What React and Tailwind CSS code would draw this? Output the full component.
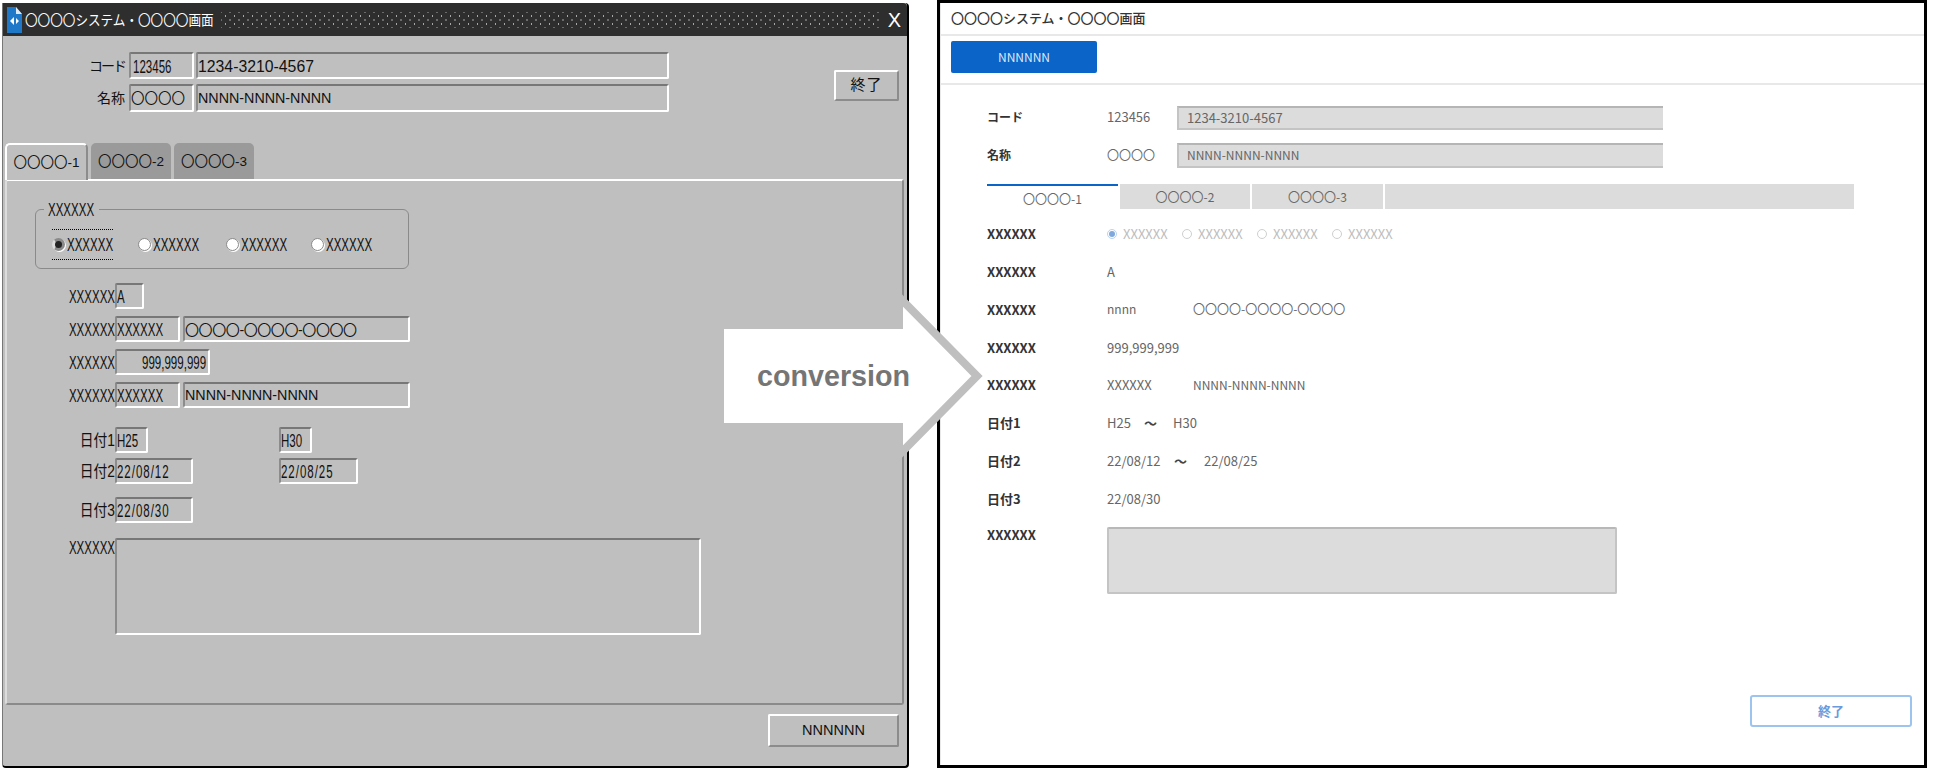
import React from "react";

const jp = "font-['Liberation_Sans','Noto_Sans_CJK_JP',sans-serif]";
const noto = "font-['Noto_Sans_CJK_JP',sans-serif]";

function Cond({ children, className = "" }) {
  return (
    <span className={`inline-block origin-left scale-x-[0.64] whitespace-nowrap text-[18px] leading-none ${className}`}>
      {children}
    </span>
  );
}

function Sunken({ className = "", children }) {
  return (
    <div
      className={`flex items-center overflow-hidden whitespace-nowrap rounded-[2px] border-2 border-t-[#777777] border-l-[#8c8c8c] border-r-white border-b-white pt-[2px] ${className}`}
    >
      {children}
    </div>
  );
}

function Label({ children, className = "w-[108px]", inner = "scale-x-[0.64] text-[18px]" }) {
  return (
    <div className={`flex shrink-0 items-center justify-end overflow-visible pt-[2px] leading-none ${className}`}>
      <span className={`inline-block origin-right whitespace-nowrap ${inner}`}>{children}</span>
    </div>
  );
}

function DateLabel({ children }) {
  return <Label inner="scale-x-[0.86] text-[16px]">{children}</Label>;
}

function OldRadio({ label, on, className }) {
  return (
    <div className={`flex items-center ${className}`}>
      <span
        className={`h-[13px] w-[13px] shrink-0 rounded-full border border-[#8a8a8a] shadow-[1px_1px_0_#ffffff] ${on ? "border-[3px] border-l-[#dddddd] bg-[#222222]" : "bg-white"}`}
      />
      <Cond className="ml-[2px]">{label}</Cond>
    </div>
  );
}

function TitleIcon() {
  return (
    <svg width="15" height="26" viewBox="0 0 15 26" className="shrink-0">
      <path d="M0 0H9L15 7V26H0Z" fill="#1f78c8" />
      <path d="M9 0L15 7H9Z" fill="#dfe9f3" />
      <path d="M7 10L3 14L7 18ZM9 11V17L12 14Z" fill="#ffffff" />
    </svg>
  );
}

function OldWindow() {
  return (
    <div className={`mt-[3px] flex h-[765px] w-[907px] shrink-0 flex-col rounded-b-[4px] rounded-tr-[4px] border-r-2 border-b-2 border-l border-black border-l-[#777777] bg-[#bfbfbf] text-[#111111] ${jp}`}>
      <div className="flex h-[33px] shrink-0 items-center rounded-tr-[4px] bg-[#2e2e2e] pl-[4px] pr-[6px] text-white">
        <TitleIcon />
        <div className="ml-[3px] w-[196px] shrink-0">
          <span className="inline-block origin-left scale-x-[0.9] whitespace-nowrap text-[14px] leading-none">
            〇〇〇〇システム・〇〇〇〇画面
          </span>
        </div>
        <div className="h-[16px] flex-1 bg-[radial-gradient(circle,#a8a8a8_0.8px,transparent_1px),radial-gradient(circle,#a8a8a8_0.8px,transparent_1px)] bg-[size:9px_8px] bg-[position:0_0,4.5px_4px]" />
        <span className="ml-[6px] text-[20px] leading-none">X</span>
      </div>

      <div className="flex h-[107px] shrink-0 justify-between pt-[16px] pr-[8px]">
        <div className="flex flex-col gap-[5px]">
          <div className="flex h-[27px] gap-[2px]">
            <div className="mr-[2px] flex w-[122px] items-center justify-end text-[14px] leading-none tracking-[-2px]">コード</div>
            <Sunken className="w-[65px]">
              <Cond className="ml-[2px]">123456</Cond>
            </Sunken>
            <Sunken className="w-[473px] text-[15.8px]">1234-3210-4567</Sunken>
          </div>
          <div className="flex h-[28px] gap-[2px]">
            <div className="mr-[2px] flex w-[122px] items-center justify-end text-[14px] leading-none">名称</div>
            <Sunken className="w-[65px] text-[13.5px]">〇〇〇〇</Sunken>
            <Sunken className="w-[473px] text-[14.3px]">NNNN-NNNN-NNNN</Sunken>
          </div>
        </div>
        <button className="mt-[18px] flex h-[31px] w-[65px] items-center justify-center rounded-[2px] border-2 border-t-white border-l-white border-r-[#8c8c8c] border-b-[#8c8c8c] text-[15px] tracking-[1px]">
          終了
        </button>
      </div>

      <div className="relative z-10 -mb-[1px] ml-[2px] flex h-[37px] shrink-0 items-start gap-[3px]">
        <div className="flex h-[37px] w-[83px] items-center justify-center rounded-t-[5px] border-2 border-b-0 border-t-white border-l-white border-r-[#8c8c8c] bg-[#bfbfbf] pt-[2px] text-[13.5px]">
          〇〇〇〇-1
        </div>
        <div className="flex h-[36px] w-[80px] items-center justify-center rounded-t-[5px] bg-[#9a9a9a] pt-[2px] text-[13.5px]">〇〇〇〇-2</div>
        <div className="flex h-[36px] w-[80px] items-center justify-center rounded-t-[5px] bg-[#9a9a9a] pt-[2px] text-[13.5px]">〇〇〇〇-3</div>
      </div>

      <div className="ml-[2px] mr-[3px] flex min-h-0 flex-1 flex-col rounded-[3px] border-2 border-t-white border-l-[#dcdcdc] border-r-[#8a8a8a] border-b-[#8a8a8a]">
        <div className="relative ml-[28px] mt-[28px] flex h-[60px] w-[374px] shrink-0 items-start rounded-[6px] border border-[#8a8a8a] pl-[16px] pt-[19px]">
          <span className="absolute -top-[9px] left-[8px] bg-[#bfbfbf] px-[4px] text-[18px] leading-none">
            <span className="inline-block w-[47px] origin-left scale-x-[0.64] whitespace-nowrap">XXXXXX</span>
          </span>
          <OldRadio label="XXXXXX" on className="h-[31px] w-[61px] border-y border-dotted border-black" />
          <OldRadio label="XXXXXX" className="ml-[25px] h-[31px] w-[63px]" />
          <OldRadio label="XXXXXX" className="ml-[25px] h-[31px] w-[60px]" />
          <OldRadio label="XXXXXX" className="ml-[25px] h-[31px] w-[61px]" />
        </div>

        <div className="mt-[14px] flex flex-col gap-[7px]">
          <div className="flex h-[26px]">
            <Label>XXXXXX</Label>
            <Sunken className="w-[29px]">
              <Cond>A</Cond>
            </Sunken>
          </div>
          <div className="flex h-[26px]">
            <Label>XXXXXX</Label>
            <Sunken className="w-[65px]">
              <Cond>XXXXXX</Cond>
            </Sunken>
            <Sunken className="ml-[3px] w-[227px] text-[14px] tracking-[-0.4px]">〇〇〇〇-〇〇〇〇-〇〇〇〇</Sunken>
          </div>
          <div className="flex h-[26px]">
            <Label>XXXXXX</Label>
            <Sunken className="w-[95px] justify-end pr-[2px]">
              <span className="inline-block origin-right scale-x-[0.64] whitespace-nowrap text-[18px] leading-none">999,999,999</span>
            </Sunken>
          </div>
          <div className="flex h-[26px]">
            <Label>XXXXXX</Label>
            <Sunken className="w-[65px]">
              <Cond>XXXXXX</Cond>
            </Sunken>
            <Sunken className="ml-[3px] w-[227px] text-[14.3px]">NNNN-NNNN-NNNN</Sunken>
          </div>
        </div>

        <div className="mt-[19px] flex h-[26px]">
          <DateLabel>日付1</DateLabel>
          <Sunken className="w-[33px]">
            <Cond>H25</Cond>
          </Sunken>
          <Sunken className="ml-[131px] w-[33px]">
            <Cond>H30</Cond>
          </Sunken>
        </div>
        <div className="mt-[5px] flex h-[26px]">
          <DateLabel>日付2</DateLabel>
          <Sunken className="w-[78px]">
            <Cond className="tracking-[1.5px]">22/08/12</Cond>
          </Sunken>
          <Sunken className="ml-[86px] w-[79px]">
            <Cond className="tracking-[1.5px]">22/08/25</Cond>
          </Sunken>
        </div>
        <div className="mt-[13px] flex h-[26px]">
          <DateLabel>日付3</DateLabel>
          <Sunken className="w-[78px]">
            <Cond className="tracking-[1.5px]">22/08/30</Cond>
          </Sunken>
        </div>
        <div className="mt-[15px] flex h-[97px]">
          <Label className="h-[18px] w-[108px]">XXXXXX</Label>
          <Sunken className="w-[586px]" />
        </div>
      </div>

      <div className="flex h-[61px] shrink-0 items-start justify-end pr-[8px] pt-[9px]">
        <button className="flex h-[33px] w-[131px] items-center justify-center rounded-[2px] border-2 border-t-white border-l-white border-r-[#8c8c8c] border-b-[#8c8c8c] text-[14.5px]">
          NNNNNN
        </button>
      </div>
    </div>
  );
}

function NewRow({ label, children }) {
  return (
    <div className="flex h-[37.8px] items-center text-[13px]">
      <div className="w-[120px] shrink-0 text-[13px] font-bold text-[#333333]">{label}</div>
      {children}
    </div>
  );
}

function NewRadio({ on, className = "" }) {
  return (
    <div className={`flex items-center text-[13px] text-[#bdbdbd] ${className}`}>
      <span className={`mr-[6px] flex h-[10px] w-[10px] items-center justify-center rounded-full border ${on ? "border-[#b9d3ee]" : "border-[#cfcfcf]"}`}>
        {on && <span className="h-[6px] w-[6px] rounded-full bg-[#7fa9dc]" />}
      </span>
      XXXXXX
    </div>
  );
}

function NewScreen() {
  return (
    <div className={`ml-[28px] flex h-[768px] w-[990px] shrink-0 flex-col border-[3px] border-black bg-white text-[12px] text-[#666666] shadow-[inset_1px_0_0_#e8e8e8] ${noto}`}>
      <div className="flex h-[33px] shrink-0 items-center border-b-2 border-[#e8e8e8] pl-[11px] pb-[1px] text-[13px] font-medium text-[#333333]">
        〇〇〇〇システム・〇〇〇〇画面
      </div>
      <div className="flex h-[49px] shrink-0 items-start border-b-2 border-[#e8e8e8] pl-[11px] pt-[5px]">
        <button className="flex h-[32px] w-[146px] items-center justify-center rounded-[2px] bg-[#0b64c8] text-[12px] text-[#dbe8f7]">
          NNNNNN
        </button>
      </div>

      <div className="flex min-h-0 flex-1 flex-col pl-[47px]">
        <div className="mt-[21px] flex h-[24px] items-center">
          <div className="-mt-[2px] w-[120px] text-[12px] font-bold text-[#333333]">コード</div>
          <div className="-mt-[2px] w-[70px] text-[13px]">123456</div>
          <div className="flex h-[24px] w-[486px] items-center border-y-2 border-l-2 border-t-[#b5b5b5] border-l-[#c4c4c4] border-b-[#c4c4c4] bg-[#dcdcdc] pb-[1px] pl-[8px] text-[13px]">
            1234-3210-4567
          </div>
        </div>
        <div className="mt-[13px] flex h-[25px] items-center">
          <div className="-mt-[2px] w-[120px] text-[12px] font-bold text-[#333333]">名称</div>
          <div className="-mt-[2px] w-[70px]">〇〇〇〇</div>
          <div className="flex h-[25px] w-[486px] items-center border-y-2 border-l-2 border-t-[#b5b5b5] border-l-[#c4c4c4] border-b-[#c4c4c4] bg-[#dcdcdc] pb-[1px] pl-[8px]">
            NNNN-NNNN-NNNN
          </div>
        </div>

        <div className="mt-[16px] flex h-[25px] w-[867px] gap-[2px]">
          <div className="flex w-[131px] items-center justify-center border-t-2 border-[#0b64c8] pt-[2px]">〇〇〇〇-1</div>
          <div className="flex w-[130px] items-center justify-center bg-[#dcdcdc]">〇〇〇〇-2</div>
          <div className="flex w-[131px] items-center justify-center bg-[#dcdcdc]">〇〇〇〇-3</div>
          <div className="flex-1 bg-[#dcdcdc]" />
        </div>

        <div className="mt-[6px] flex flex-col">
          <NewRow label="XXXXXX">
            <NewRadio on className="ml-0 w-[75px]" />
            <NewRadio className="w-[75px]" />
            <NewRadio className="w-[75px]" />
            <NewRadio />
          </NewRow>
          <NewRow label="XXXXXX">A</NewRow>
          <NewRow label="XXXXXX">
            <div className="w-[86px] text-[12px]">nnnn</div>
            <div className="text-[12px]">〇〇〇〇-〇〇〇〇-〇〇〇〇</div>
          </NewRow>
          <NewRow label="XXXXXX">999,999,999</NewRow>
          <NewRow label="XXXXXX">
            <div className="w-[86px]">XXXXXX</div>
            <div className="text-[12px]">NNNN-NNNN-NNNN</div>
          </NewRow>
          <NewRow label="日付1">
            <div className="w-[37px]">H25</div>
            <div className="w-[29px] font-bold text-[#444444]">～</div>
            <div>H30</div>
          </NewRow>
          <NewRow label="日付2">
            <div className="w-[67px]">22/08/12</div>
            <div className="w-[30px] font-bold text-[#444444]">～</div>
            <div>22/08/25</div>
          </NewRow>
          <NewRow label="日付3">22/08/30</NewRow>
          <div className="mt-[10px] flex">
            <div className="-mt-px w-[120px] text-[13px] font-bold leading-[18px] text-[#333333]">XXXXXX</div>
            <div className="h-[67px] w-[510px] rounded-[2px] border-2 border-[#c4c4c4] border-t-[#b8b8b8] bg-[#dcdcdc]" />
          </div>
        </div>

        <button className="mb-[38px] mr-[12px] mt-auto flex h-[32px] w-[162px] items-center justify-center self-end rounded-[3px] border-2 border-[#9cc4ee] text-[13px] font-bold text-[#6a9bdc]">
          終了
        </button>
      </div>
    </div>
  );
}

export default function App() {
  return (
    <div className="relative flex h-[781px] w-[1952px] items-start overflow-hidden bg-white pl-[2px]">
      <OldWindow />
      <NewScreen />
      {/* conversion arrow sits over both panels */}
      <svg width="300" height="200" viewBox="700 280 300 200" className="absolute left-[700px] top-[280px]">
        <polygon
          points="720,325 899,325 899,297 977,376 899,455 899,427 720,427"
          fill="#ffffff"
          stroke="#bfbfbf"
          strokeWidth="8"
          strokeMiterlimit="10"
        />
      </svg>
      <div className="absolute left-[757px] top-[359px] font-['Liberation_Sans',sans-serif] text-[28.7px] font-bold leading-[34px] text-[#757575]">
        conversion
      </div>
    </div>
  );
}
